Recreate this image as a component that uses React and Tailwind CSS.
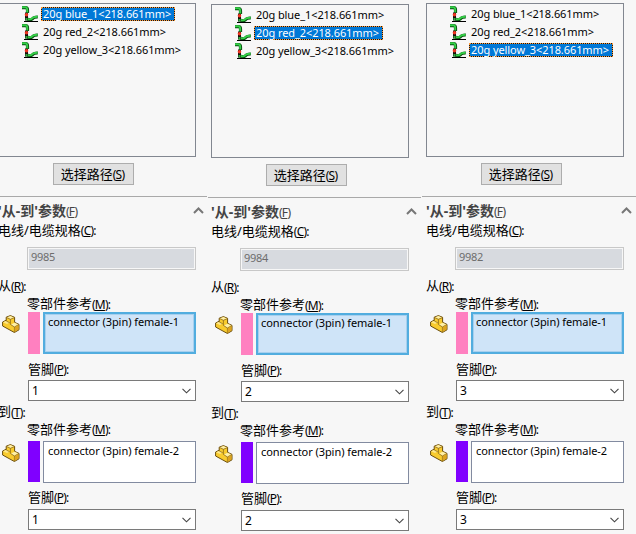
import React from "react";

const ROUTES = ["20g blue_1<218.661mm>", "20g red_2<218.661mm>", "20g yellow_3<218.661mm>"];

function RouteIcon() {
  return (
    <svg className="h-4 w-4 shrink-0" viewBox="0 0 16 16" fill="none">
      <path d="M0 1.6H3.5Q5.5 1.6 5.5 4V7" stroke="#06500f" strokeWidth="3.2" />
      <path d="M0 1.3H3.5Q5.2 1.5 5.2 4V7" stroke="#35cf48" strokeWidth="1.9" />
      <path d="M5.5 13.2Q8.5 14.6 10.5 12.8Q11.5 10.9 15.8 11" stroke="#06500f" strokeWidth="3" />
      <path d="M5.5 13Q8.5 14 10.3 12.3Q11.5 10.5 15.6 10.7" stroke="#35cf48" strokeWidth="1.9" />
      <path d="M3 6.5H6V14.5H3Z" fill="#16100c" />
      <circle cx="4.5" cy="8.8" r="1.8" fill="#ee3520" />
      <path d="M3.5 12H5.5V14.5H3.5Z" fill="#2fae3f" />
      <path d="M2 15.5H16" stroke="#000" />
    </svg>
  );
}

function PartIcon() {
  return (
    <svg className="h-[18px] w-[18px]" viewBox="0 0 18 18" strokeLinejoin="round">
      <path d="M.6 7L4.2 5.2V2.2L8.4 .6L12.6 2.3V7.3L17 9.4V14.8L12.4 17.5L.6 11Z" fill="#f8cb2e" stroke="#6b4e10" strokeWidth="1" />
      <path d="M4.6 2.4L8.4 1.1L12.1 2.5L8.4 4.2Z" fill="#fff0a8" />
      <path d="M1 7.2L4.2 5.7L7.6 7.5L5 9Z" fill="#ffe88a" />
      <path d="M8.8 9.6L12.6 7.8L16.5 9.6L12.4 12Z" fill="#fff0a8" />
      <path d="M4.4 2.4L8.4 4.3L12.4 2.6M8.4 4.3V9.4L12.4 12L16.7 9.6M12.4 12V17M4.3 5V6L7.8 7.8" fill="none" stroke="#8d6917" strokeWidth=".8" />
      <path d="M12.8 12.2L16.5 10.2V14.5L12.8 16.7Z" fill="#dda321" />
    </svg>
  );
}

function Label({ text, hotkey, colon = true, className = "h-5" }) {
  return (
    <div className={`flex items-center whitespace-nowrap text-[13px] leading-none ${className}`}>
      <span>{text}</span>
      <span className="mt-[2px] text-[12px] tracking-[-0.8px] font-normal">
        (<span className="underline underline-offset-1">{hotkey}</span>){colon && ":"}
      </span>
    </div>
  );
}

function Select({ value }) {
  return (
    <div className="ml-[30px] flex h-[21px] w-[168px] items-center justify-between border border-[#7a7a7a] bg-white pl-[3px] pr-1 text-[12px]">
      <span>{value}</span>
      <svg className="h-[6px] w-[9px]" viewBox="0 0 9 6" fill="none">
        <path d="M.5 .8L4.5 4.8L8.5 .8" stroke="#444" strokeWidth="1.1" />
      </svg>
    </div>
  );
}

function Endpoint({ title, hotkey, part, pin, active }) {
  return (
    <div>
      <Label text={title} hotkey={hotkey} className="h-[17px]" />
      <Label text="零部件参考" hotkey="M" className={`ml-[29px] ${active ? "h-[18px] pt-px" : "mb-[3px] h-[18px]"}`} />
      <div className="flex h-[42px]">
        <div className="w-[30px] pl-1 pt-[3px]"><PartIcon /></div>
        <div className={`mr-[3px] w-3 ${active ? "bg-[#ff80c0]" : "mb-px bg-[#8000ff]"}`} />
        <div className={`w-[153px] whitespace-nowrap text-[11px] leading-4 tracking-[-0.06px] ${active ? "border-2 border-[#52addf] bg-[#cfe4f8] pl-[3px] shadow-[inset_0_0_0_1px_#a8d0ee]" : "border border-[#828ba0] bg-white pl-1 pt-px"}`}>
          {part}
        </div>
      </div>
      <Label text="管脚" hotkey="P" className={`ml-[30px] h-5 ${active ? "mb-px mt-[5px]" : "mb-[2px] mt-1"}`} />
      <Select value={pin} />
    </div>
  );
}

function Panel({ selected, spec, pin, widthClass, insetClass, topClass }) {
  return (
    <section className={`h-[534px] shrink-0 overflow-hidden ${widthClass} ${topClass}`}>
      <div className={`w-[198px] ${insetClass}`}>
        <div className="h-[154px] border border-[#828790] pl-[23px] pt-[2px]">
          {ROUTES.map((route, i) => (
            <div key={route} className="flex h-[18px] items-start">
              <RouteIcon />
              <div className={`ml-[3px] mt-px h-[14px] whitespace-nowrap border border-dotted text-[11px] leading-[12px] tracking-[-0.08px] ${i === selected ? "border-[#ff9a35] bg-[#101820] text-white" : "border-transparent"}`}>
                <div className={`h-3 pl-px pr-[3px] ${i === selected ? "bg-[#0078d7]" : ""}`}>{route}</div>
              </div>
            </div>
          ))}
        </div>
        <button className="ml-[55px] mt-[6px] flex h-[22px] w-[81px] items-center justify-center border border-[#adadad] bg-[#e1e1e1] pr-[2px]">
          <Label text="选择路径" hotkey="S" colon={false} />
        </button>
      </div>
      <div className="mt-[11px] h-px bg-[#a9a9a9]" />
      <div className={`w-[208px] ${insetClass}`}>
        <div className="mt-1 flex h-[19px] items-center justify-between text-[#444]">
          <Label text={<b className="text-[14px]">'从-到'参数</b>} hotkey="F" colon={false} />
          <svg className="mr-[2px] h-[7px] w-[11px]" viewBox="0 0 11 7" fill="none">
            <path d="M1 6L5.5 1.5L10 6" stroke="#777" strokeWidth="2" />
          </svg>
        </div>
        <Label text="电线/电缆规格" hotkey="C" />
        <div className="ml-[29px] mt-[7px] h-[23px] w-[169px] border border-[#c8c8c8] bg-[#d7dadf] pl-[3px] text-[11px] leading-[18px] tracking-[-0.3px] text-[#6d6d6d] shadow-[inset_0_0_0_1px_#f7f7f7]">
          {spec}
        </div>
        <div className="h-[7px]" />
        <Endpoint title="从" hotkey="R" part="connector (3pin) female-1" pin={pin} active />
        <div className="h-[2px]" />
        <Endpoint title="到" hotkey="T" part="connector (3pin) female-2" pin={pin} />
      </div>
    </section>
  );
}

export default function App() {
  return (
    <main className="flex h-[534px] w-[636px] overflow-hidden bg-[#f7f7f7] font-['Noto_Sans','Noto_Sans_CJK_SC',sans-serif] text-black">
      <Panel selected={0} spec="9985" pin="1" widthClass="w-[207px] mr-px" insetClass="-ml-[2px]" topClass="pt-[3px]" />
      <Panel selected={1} spec="9984" pin="2" widthClass="w-[213px] mr-px" insetClass="ml-[3px]" topClass="pt-[4px]" />
      <Panel selected={2} spec="9982" pin="3" widthClass="w-[214px]" insetClass="ml-[4px]" topClass="pt-[3px]" />
    </main>
  );
}
